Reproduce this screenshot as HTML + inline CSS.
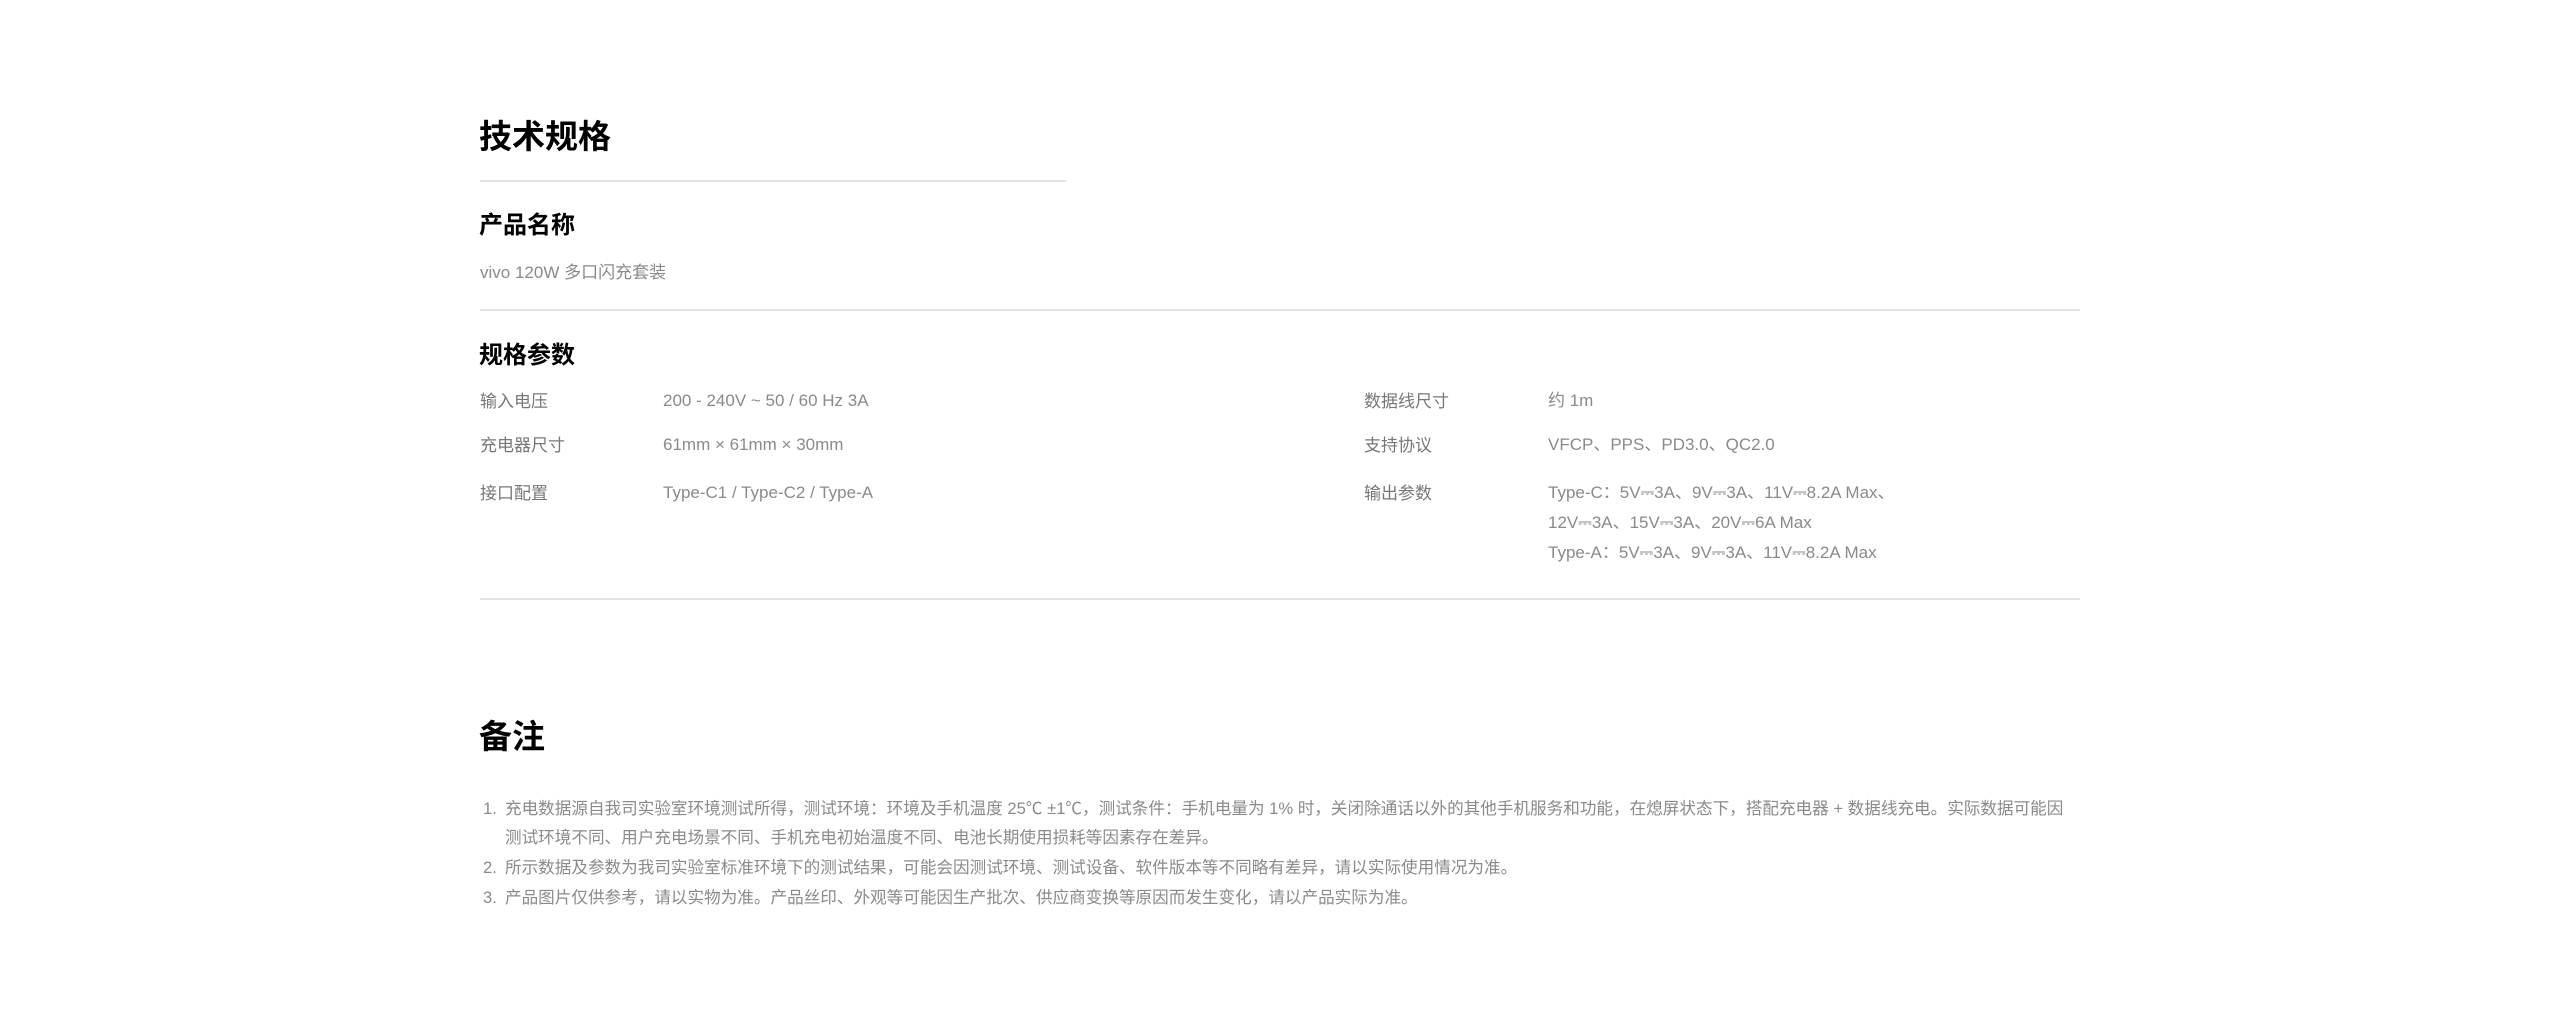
<!DOCTYPE html>
<html><head><meta charset="utf-8"><style>
body{margin:0;width:2560px;height:1026px;background:#fff;font-family:"Liberation Sans","Noto Sans CJK SC",sans-serif;position:relative;overflow:hidden}
.a{position:absolute;white-space:nowrap}
.t{font-size:33px;line-height:40px;font-weight:700;color:#000}
.s{font-size:24px;line-height:30px;font-weight:700;color:#000}
.g{font-size:17px;line-height:30px;color:#8a8a8a}
.n{font-size:16.6px;line-height:30px;color:#8a8a8a}
.l{font-size:17px;line-height:30px;color:#777}
.hr{position:absolute;height:2px;background:#e2e2e2}
</style></head><body>
<div class="a t" style="left:479px;top:117px">技术规格</div>
<div class="hr" style="left:480px;top:180px;width:586px"></div>
<div class="a s" style="left:479px;top:211px">产品名称</div>
<div class="a g" style="left:480px;top:258px">vivo 120W 多口闪充套装</div>
<div class="hr" style="left:480px;top:309px;width:1600px"></div>
<div class="a s" style="left:479px;top:341px">规格参数</div>

<div class="a l" style="left:480px;top:387px">输入电压</div>
<div class="a g" style="left:663px;top:386px">200 - 240V ~ 50 / 60 Hz 3A</div>
<div class="a l" style="left:480px;top:431px">充电器尺寸</div>
<div class="a g" style="left:663px;top:430px">61mm × 61mm × 30mm</div>
<div class="a l" style="left:480px;top:479px">接口配置</div>
<div class="a g" style="left:663px;top:478px">Type-C1 / Type-C2 / Type-A</div>

<div class="a l" style="left:1364px;top:387px">数据线尺寸</div>
<div class="a g" style="left:1548px;top:386px">约 1m</div>
<div class="a l" style="left:1364px;top:431px">支持协议</div>
<div class="a g" style="left:1548px;top:430px">VFCP、PPS、PD3.0、QC2.0</div>
<div class="a l" style="left:1364px;top:479px">输出参数</div>
<div class="a g" style="left:1548px;top:478px">Type-C：5V⎓3A、9V⎓3A、11V⎓8.2A Max、</div>
<div class="a g" style="left:1548px;top:508px">12V⎓3A、15V⎓3A、20V⎓6A Max</div>
<div class="a g" style="left:1548px;top:538px">Type-A：5V⎓3A、9V⎓3A、11V⎓8.2A Max</div>
<div class="hr" style="left:480px;top:598px;width:1600px"></div>

<div class="a t" style="left:479px;top:717px">备注</div>
<div class="a n" style="left:483px;top:794px">1.</div>
<div class="a n" style="left:505px;top:794px">充电数据源自我司实验室环境测试所得，测试环境：环境及手机温度 25℃ ±1℃，测试条件：手机电量为 1% 时，关闭除通话以外的其他手机服务和功能，在熄屏状态下，搭配充电器 + 数据线充电。实际数据可能因</div>
<div class="a n" style="left:505px;top:823px">测试环境不同、用户充电场景不同、手机充电初始温度不同、电池长期使用损耗等因素存在差异。</div>
<div class="a n" style="left:483px;top:853px">2.</div>
<div class="a n" style="left:505px;top:853px">所示数据及参数为我司实验室标准环境下的测试结果，可能会因测试环境、测试设备、软件版本等不同略有差异，请以实际使用情况为准。</div>
<div class="a n" style="left:483px;top:883px">3.</div>
<div class="a n" style="left:505px;top:883px">产品图片仅供参考，请以实物为准。产品丝印、外观等可能因生产批次、供应商变换等原因而发生变化，请以产品实际为准。</div>
</body></html>
